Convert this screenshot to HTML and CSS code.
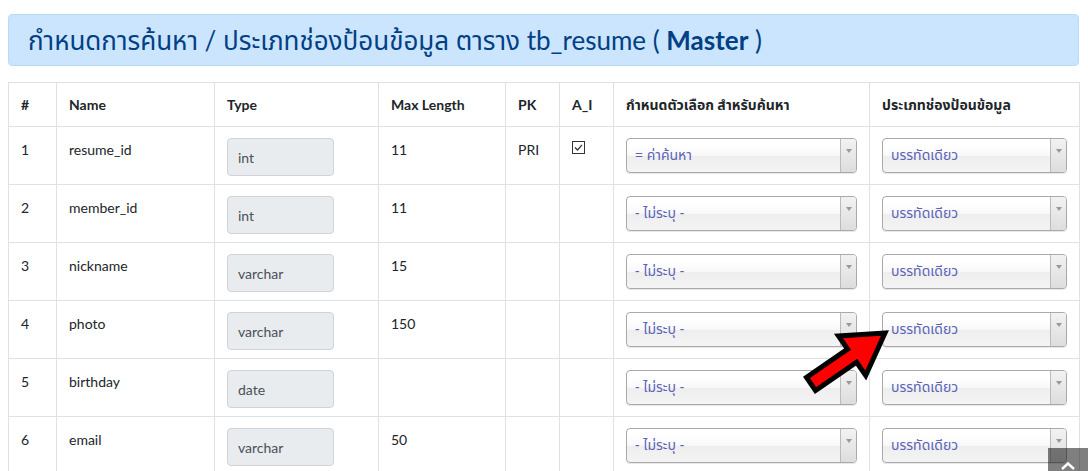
FILE: index.html
```html
<!DOCTYPE html>
<html lang="th">
<head>
    <meta charset="UTF-8">
    <meta name="viewport" content="width=device-width, initial-scale=1.0">
    <title>tb_resume</title>
    <link rel="stylesheet" href="styles.css">
</head>
<body>
    <div class="page">
        <div class="alert">
            <h3>กำหนดการค้นหา / ประเภทช่องป้อนข้อมูล ตาราง tb_resume ( <b>Master</b> )</h3>
        </div>

        <table class="fields">
            <colgroup>
                <col style="width:48px">
                <col style="width:158px">
                <col style="width:164px">
                <col style="width:127px">
                <col style="width:54px">
                <col style="width:54px">
                <col style="width:256px">
                <col style="width:210px">
            </colgroup>
            <thead>
                <tr>
                    <th>#</th>
                    <th>Name</th>
                    <th>Type</th>
                    <th>Max Length</th>
                    <th>PK</th>
                    <th>A_I</th>
                    <th>กำหนดตัวเลือก สำหรับค้นหา</th>
                    <th>ประเภทช่องป้อนข้อมูล</th>
                </tr>
            </thead>
            <tbody>
                <tr>
                    <td>1</td>
                    <td>resume_id</td>
                    <td><div class="type-box">int</div></td>
                    <td>11</td>
                    <td>PRI</td>
                    <td>
                        <svg class="check" width="13" height="13" viewBox="0 0 13 13">
                            <rect x="0.5" y="0.5" width="12" height="12" fill="#fff" stroke="#333"/>
                            <path d="M3 6.5 L5.5 9 L10 3.8" fill="none" stroke="#333" stroke-width="1.2"/>
                        </svg>
                    </td>
                    <td><div class="chosen"><span>= ค่าค้นหา</span><b></b></div></td>
                    <td><div class="chosen"><span>บรรทัดเดียว</span><b></b></div></td>
                </tr>
                <tr>
                    <td>2</td>
                    <td>member_id</td>
                    <td><div class="type-box">int</div></td>
                    <td>11</td>
                    <td></td>
                    <td></td>
                    <td><div class="chosen"><span>- ไม่ระบุ -</span><b></b></div></td>
                    <td><div class="chosen"><span>บรรทัดเดียว</span><b></b></div></td>
                </tr>
                <tr>
                    <td>3</td>
                    <td>nickname</td>
                    <td><div class="type-box">varchar</div></td>
                    <td>15</td>
                    <td></td>
                    <td></td>
                    <td><div class="chosen"><span>- ไม่ระบุ -</span><b></b></div></td>
                    <td><div class="chosen"><span>บรรทัดเดียว</span><b></b></div></td>
                </tr>
                <tr>
                    <td>4</td>
                    <td>photo</td>
                    <td><div class="type-box">varchar</div></td>
                    <td>150</td>
                    <td></td>
                    <td></td>
                    <td><div class="chosen"><span>- ไม่ระบุ -</span><b></b></div></td>
                    <td><div class="chosen"><span>บรรทัดเดียว</span><b></b></div></td>
                </tr>
                <tr>
                    <td>5</td>
                    <td>birthday</td>
                    <td><div class="type-box">date</div></td>
                    <td></td>
                    <td></td>
                    <td></td>
                    <td><div class="chosen"><span>- ไม่ระบุ -</span><b></b></div></td>
                    <td><div class="chosen"><span>บรรทัดเดียว</span><b></b></div></td>
                </tr>
                <tr>
                    <td>6</td>
                    <td>email</td>
                    <td><div class="type-box">varchar</div></td>
                    <td>50</td>
                    <td></td>
                    <td></td>
                    <td><div class="chosen"><span>- ไม่ระบุ -</span><b></b></div></td>
                    <td><div class="chosen"><span>บรรทัดเดียว</span><b></b></div></td>
                </tr>
            </tbody>
        </table>
    </div>

    <!-- arrow pointing at the input type select -->
    <svg class="pointer-arrow" width="1088" height="471" viewBox="0 0 1088 471">
        <polygon points="885,333 865.7,375.5 856.6,362.3 815.5,390.6 806.5,377.4 847.6,349.1 838.5,335.9"
                 fill="#ff0000" stroke="#000" stroke-width="5" stroke-linejoin="miter"/>
    </svg>

    <a class="to-top" href="#">
        <svg width="14" height="8" viewBox="0 0 14 8"><path d="M1 7 L7 1.5 L13 7" fill="none" stroke="#fff" stroke-width="2.4"/></svg>
    </a>
</body>
</html>
```

FILE: styles.css
```css
body {
    margin: 0;
    padding: 14px 8px 0;
    font-family: 'Segoe UI', Lato, 'Noto Sans Thai', Tahoma, sans-serif;
    font-size: 14px;
    color: #212529;
    background: #fff;
    overflow: hidden;
}
.page {
    width: 1071px;
}
.alert {
    background-color: #cce5ff;
    border: 1px solid #b8daff;
    border-radius: 4px;
    padding: 12px 19px;
    margin-bottom: 16px;
}
.alert h3 {
    margin: 0;
    font-size: 26px;
    font-weight: 400;
    line-height: 26px;
    color: #004085;
}
.alert h3 b {
    font-weight: 700;
}
.fields {
    width: 1071px;
    table-layout: fixed;
    border-collapse: collapse;
}
.fields th,
.fields td {
    border: 1px solid #dee2e6;
    text-align: left;
    vertical-align: top;
}
.fields th {
    padding: 12px 11px 12px 12px;
    line-height: 19px;
    font-weight: 700;
    font-size: 14px;
    white-space: nowrap;
}
.fields td {
    padding: 11px 12px 8px;
    line-height: 24px;
}
.type-box {
    width: 107px;
    height: 38px;
    box-sizing: border-box;
    padding: 0 10px;
    background-color: #e9ecef;
    border: 1px solid #ced4da;
    border-radius: 4px;
    color: #495057;
    line-height: 38px;
    font-size: 14px;
}
.check {
    display: block;
    margin-top: 3px;
}
.chosen {
    display: flex;
    align-items: center;
    height: 35px;
    box-sizing: border-box;
    border: 1px solid #aaa;
    border-radius: 4px;
    background: linear-gradient(#fff 20%, #f8f8f8 50%, #eee 52%, #f4f4f4 100%);
    box-shadow: 0 1px 1px rgba(0, 0, 0, 0.1);
    font-family: Tahoma, 'Noto Sans Thai', 'DejaVu Sans', sans-serif;
    font-size: 14px;
    color: #5b62b8;
    overflow: hidden;
}
.chosen span {
    flex: 1;
    padding-left: 8px;
    white-space: nowrap;
}
.chosen b {
    position: relative;
    width: 15px;
    height: 100%;
    border-left: 1px solid #bbb;
    background: linear-gradient(#f2f2f2, #ddd);
}
.chosen b::after {
    content: "";
    position: absolute;
    left: 5px;
    top: 10px;
    border-left: 3px solid transparent;
    border-right: 3px solid transparent;
    border-top: 4px solid #999;
}
.pointer-arrow {
    position: absolute;
    left: 0;
    top: 0;
    pointer-events: none;
}
.to-top {
    position: fixed;
    right: 0;
    top: 448px;
    width: 40px;
    height: 40px;
    background: rgba(0, 0, 0, 0.5);
    display: flex;
    justify-content: center;
    padding-top: 14px;
    box-sizing: border-box;
}
.to-top svg {
    display: block;
}
```
